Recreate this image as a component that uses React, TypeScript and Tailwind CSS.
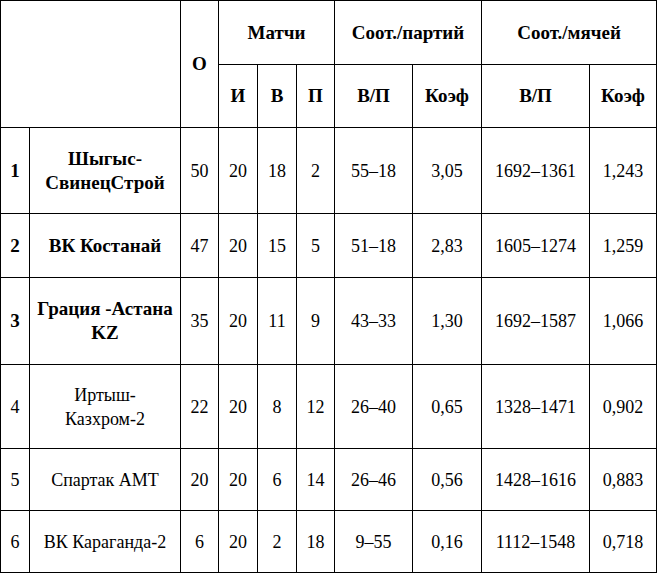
import React from "react";

type Row = {
  n: string;
  name: React.ReactNode;
  bold: boolean;
  o: string;
  i: string;
  v: string;
  p: string;
  vp1: string;
  k1: string;
  vp2: string;
  k2: string;
  h: string;
};

const rows: Row[] = [
  { n: "1", name: <>Шыгыс-<br />СвинецСтрой</>, bold: true, o: "50", i: "20", v: "18", p: "2", vp1: "55–18", k1: "3,05", vp2: "1692–1361", k2: "1,243", h: "h-[86px]" },
  { n: "2", name: "ВК Костанай", bold: true, o: "47", i: "20", v: "15", p: "5", vp1: "51–18", k1: "2,83", vp2: "1605–1274", k2: "1,259", h: "h-[64px]" },
  { n: "3", name: <>Грация -Астана<br />KZ</>, bold: true, o: "35", i: "20", v: "11", p: "9", vp1: "43–33", k1: "1,30", vp2: "1692–1587", k2: "1,066", h: "h-[87px]" },
  { n: "4", name: <>Иртыш-<br />Казхром-2</>, bold: false, o: "22", i: "20", v: "8", p: "12", vp1: "26–40", k1: "0,65", vp2: "1328–1471", k2: "0,902", h: "h-[84px]" },
  { n: "5", name: "Спартак АМТ", bold: false, o: "20", i: "20", v: "6", p: "14", vp1: "26–46", k1: "0,56", vp2: "1428–1616", k2: "0,883", h: "h-[62px]" },
  { n: "6", name: "ВК Караганда-2", bold: false, o: "6", i: "20", v: "2", p: "18", vp1: "9–55", k1: "0,16", vp2: "1112–1548", k2: "0,718", h: "h-[62px]" },
];

const td = "border border-black text-center align-middle p-0";
const bold = "font-bold text-[19px]";

export default function App() {
  return (
    <div className="w-[657px] h-[573px] bg-white font-['Liberation_Serif','Times_New_Roman',serif]">
      <table className="table-fixed border-collapse w-[656px] text-[18px] leading-[24px] text-black">
        <colgroup>
          <col className="w-[29px]" />
          <col className="w-[151px]" />
          <col className="w-[38px]" />
          <col className="w-[39px]" />
          <col className="w-[39px]" />
          <col className="w-[38px]" />
          <col className="w-[78px]" />
          <col className="w-[69px]" />
          <col className="w-[108px]" />
          <col className="w-[67px]" />
        </colgroup>
        <thead>
          <tr className="h-[64px]">
            <th className={`${td} ${bold}`} colSpan={2} rowSpan={2}></th>
            <th className={`${td} ${bold}`} rowSpan={2}>О</th>
            <th className={`${td} ${bold}`} colSpan={3}>Матчи</th>
            <th className={`${td} ${bold}`} colSpan={2}>Соот./партий</th>
            <th className={`${td} ${bold}`} colSpan={2}>Соот./мячей</th>
          </tr>
          <tr className="h-[63px]">
            <th className={`${td} ${bold}`}>И</th>
            <th className={`${td} ${bold}`}>В</th>
            <th className={`${td} ${bold}`}>П</th>
            <th className={`${td} ${bold}`}>В/П</th>
            <th className={`${td} ${bold}`}>Коэф</th>
            <th className={`${td} ${bold}`}>В/П</th>
            <th className={`${td} ${bold}`}>Коэф</th>
          </tr>
        </thead>
        <tbody>
          {rows.map((r) => (
            <tr key={r.n} className={r.h}>
              <td className={`${td} ${r.bold ? bold : ""}`}>{r.n}</td>
              <td className={`${td} ${r.bold ? bold : ""}`}>{r.name}</td>
              <td className={td}>{r.o}</td>
              <td className={td}>{r.i}</td>
              <td className={td}>{r.v}</td>
              <td className={td}>{r.p}</td>
              <td className={td}>{r.vp1}</td>
              <td className={td}>{r.k1}</td>
              <td className={td}>{r.vp2}</td>
              <td className={td}>{r.k2}</td>
            </tr>
          ))}
        </tbody>
      </table>
    </div>
  );
}
